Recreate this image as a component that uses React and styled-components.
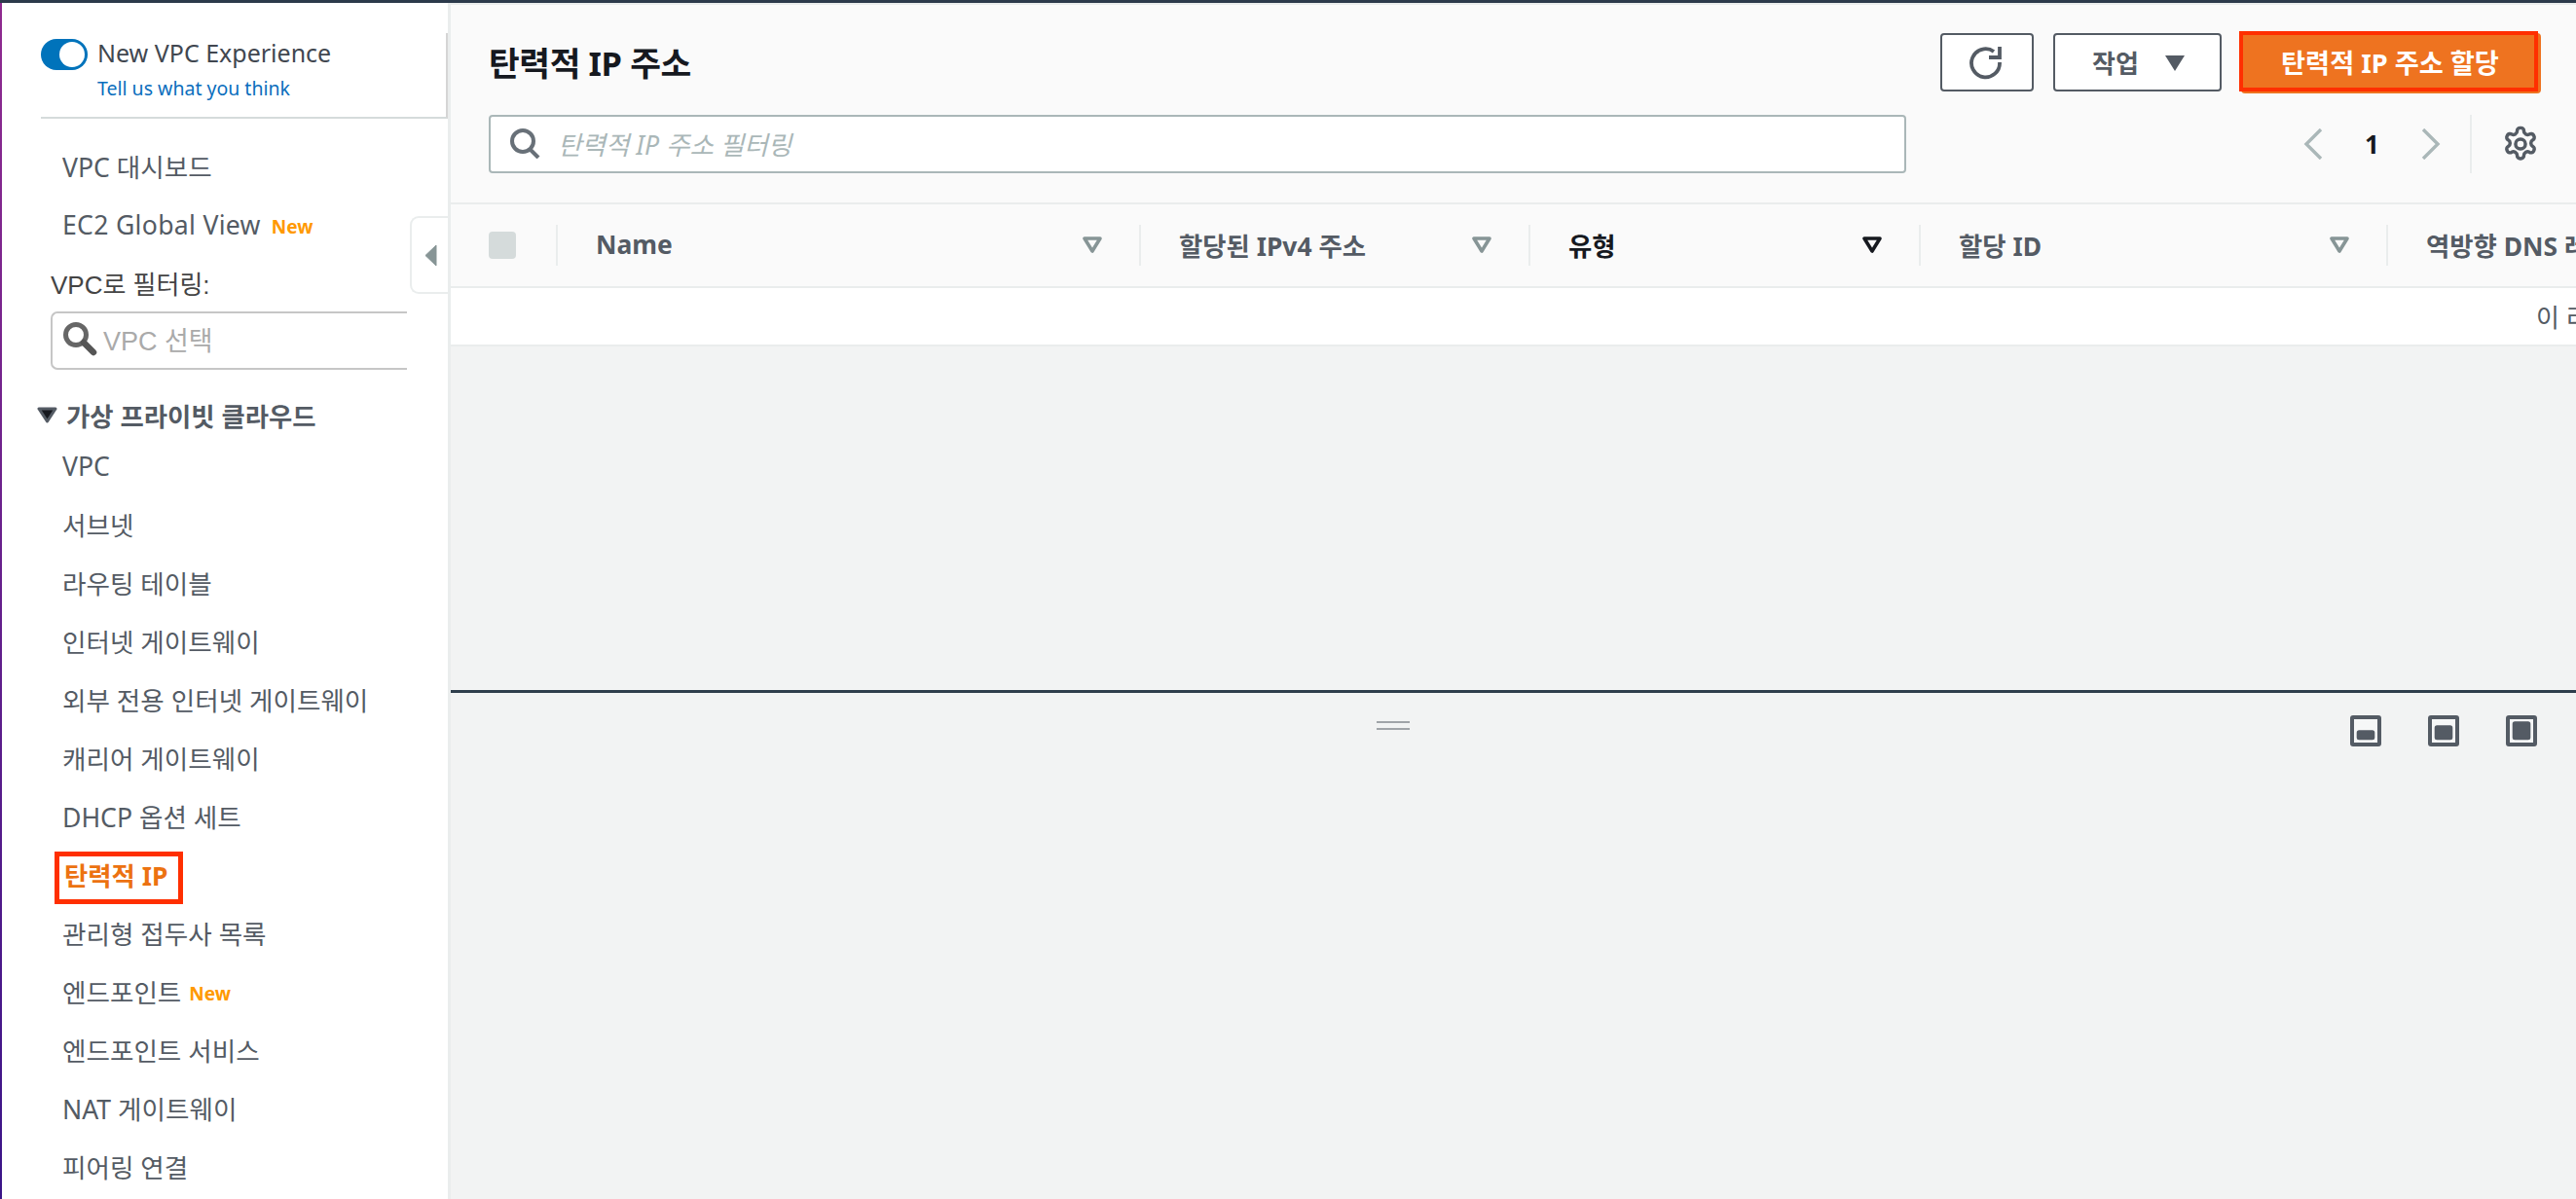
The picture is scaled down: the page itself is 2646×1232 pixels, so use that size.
import React from 'react';
import styled, { createGlobalStyle } from 'styled-components';

const Global = createGlobalStyle`
  html, body { margin: 0; padding: 0; background: #f2f3f3; }
  #root { width: 2646px; height: 1232px; overflow: hidden; }
  *, *::before, *::after { box-sizing: border-box; }
  body { font-family: "Noto Sans", "Noto Sans CJK KR", sans-serif; }
`;

const Page = styled.div`
  display: flex; flex-direction: column; width: 2646px; height: 1232px; overflow: hidden;
`;
const TopBar = styled.div`
  height: 3px; flex: none; background: #2c3a4b;
`;
const Body = styled.div`
  flex: 1; display: flex; min-height: 0;
`;
const Strip = styled.div`
  width: 2px; flex: none; background: linear-gradient(180deg, #8f2a8f 0%, #3a1488 100%);
`;
const Sidebar = styled.aside`
  position: relative; width: 461px; flex: none; background: #fff; border-right: 3px solid #eaeded;
  padding-top: 31px; overflow: hidden;
`;
const ToggleSection = styled.div`
  margin-left: 40px; height: 88px; border-bottom: 2px solid #d5dbdb; border-right: 2px solid #d5d5d5;
  display: grid; grid-template-columns: 48px 1fr; column-gap: 10px; padding-top: 6px; align-content: start;
`;
const Toggle = styled.div`
  width: 48px; height: 32px; border-radius: 16px; background: #0073bb; display: flex; align-items: center; justify-content: flex-end; padding-right: 3px;
  &::after { content: ""; width: 26px; height: 26px; border-radius: 50%; background: #fff; }
`;
const ToggleLabel = styled.div`
  font-size: 25px; line-height: 32px; color: #414750; white-space: nowrap; margin-top: -2px;
`;
const FeedbackLink = styled.a`
  grid-column: 2; font-size: 19.5px; line-height: 28px; margin-top: 5px; color: #0a6ebd; white-space: nowrap;
`;
const NavList = styled.div`
  display: flex; flex-direction: column; margin-top: ${p => p.$top || 0}px;
`;
const NavItem = styled.div`
  height: 60px; display: flex; align-items: center; padding: 0 0 3px 62px; font-size: 26.6px; color: #545b64; white-space: nowrap;
  letter-spacing: ${p => p.$spaced ? '0.3px' : '0'};
`;
const ActiveItem = styled.div`
  position: relative; height: 60px; display: flex; align-items: center; padding: 0 0 3px 64px; font-size: 26.4px; font-weight: 700; color: #ec7211; white-space: nowrap;
  &::after { content: ""; position: absolute; left: 54px; top: 5px; width: 132px; height: 54px; border: 5px solid #ff2f00; }
`;
const NewTag = styled.span`
  margin-left: ${p => p.$ml}px; font-size: 19px; font-weight: 700; letter-spacing: 0; color: #ff9900; padding-top: 5px;
`;
const FilterBlock = styled.div`
  padding: 0 0 26px 50px;
`;
const FilterLabel = styled.div`
  height: 58px; display: flex; align-items: center; padding-bottom: 2px; font-family: "Liberation Sans", "Noto Sans CJK KR", sans-serif; font-size: 26px; color: #444;
`;
const VpcSelect = styled.div`
  width: 366px; height: 60px; border: 2px solid #c6c6c6; border-right: none; border-radius: 7px 0 0 7px; display: flex; align-items: center; gap: 6px; padding: 0 0 4px 10px;
  font-family: "Liberation Sans", "Noto Sans CJK KR", sans-serif; font-size: 27px; color: #aaa;
`;
const GroupHead = styled.div`
  height: 44px; display: flex; align-items: center; gap: 9px; padding: 0 0 3px 36px; font-size: 26.4px; font-weight: 700; color: #545b64; white-space: nowrap;
`;
const Handle = styled.div`
  position: absolute; right: -3px; top: 219px; width: 42px; height: 80px; background: #fff; border: 2px solid #eaeded; border-right: none; border-radius: 9px 0 0 9px;
  display: flex; align-items: center; padding-left: 13px;
`;
const Main = styled.main`
  flex: 1; min-width: 0; display: flex; flex-direction: column; overflow: hidden;
`;
const Header = styled.header`
  flex: none; height: 207px; background: #fafafa; border-bottom: 2px solid #eaeded; padding: 31px 36px 0 39px;
  display: flex; flex-direction: column; gap: 24px; box-shadow: inset 0 2px 0 #eaeded;
`;
const HeaderRow = styled.div`
  display: flex; align-items: center; height: 60px;
`;
const Title = styled.h1`
  flex: 1; margin: 0 0 3px; font-size: 34.5px; font-weight: 700; color: #16191f; white-space: nowrap; letter-spacing: -0.4px;
`;
const Button = styled.button`
  height: 60px; width: ${p => p.$w}px; margin-left: ${p => p.$ml || 0}px; background: #fff; border: 2px solid #545b64; border-radius: 4px; display: flex; align-items: center; justify-content: center; gap: 26px;
  font-family: inherit; font-size: 26px; font-weight: 700; color: #545b64; padding: 0 ${p => p.$pr || 0}px 0 ${p => p.$pl || 0}px;
`;
const PrimaryButton = styled.button`
  position: relative; height: 62px; width: 308px; margin: 2px 0 0 20px; background: #ee7320; border: none; border-radius: 4px;
  font-family: inherit; font-size: 27.2px; font-weight: 700; color: #fff; padding: 0 2px 5px 0; white-space: nowrap;
  &::after { content: ""; position: absolute; left: -2px; top: -2px; width: 307px; height: 62px; border: 4px solid #ff2f00; }
`;
const FilterInput = styled.div`
  width: 1456px; height: 60px; background: #fff; border: 2px solid #aab7b8; border-radius: 4px; display: flex; align-items: center; gap: 18px; padding: 0 0 2px 19px;
  font-size: 26.6px; font-style: italic; color: #aab7b8; white-space: nowrap;
`;
const Pager = styled.div`
  flex: 1; display: flex; align-items: center; justify-content: flex-end; padding-right: 2px;
`;
const PageNum = styled.div`
  width: 101px; text-align: center; font-size: 26px; font-weight: 700; color: #16191f;
`;
const PagerDivider = styled.div`
  width: 2px; height: 60px; background: #eaeded; margin: 0 31px 0 30px;
`;
const TableHead = styled.div`
  flex: none; height: 86px; background: #fafafa; border-bottom: 2px solid #eaeded; display: flex; align-items: center; white-space: nowrap;
`;
const CheckCell = styled.div`
  width: 110px; flex: none; height: 42px; padding-left: 39px; display: flex; align-items: center; border-right: 2px solid #eaeded;
`;
const Check = styled.div`
  width: 28px; height: 28px; border-radius: 4px; background: #d5dbdb;
`;
const Col = styled.div`
  width: ${p => p.$w}px; flex: none; height: 42px; display: flex; align-items: center; justify-content: space-between; padding: 0 ${p => p.$last ? 0 : 38}px 2px 39px; border-right: ${p => p.$last ? 'none' : '2px solid #eaeded'};
  font-size: 26.4px; font-weight: 700; color: ${p => p.$sorted ? '#16191f' : '#545b64'};
`;
const EmptyRow = styled.div`
  flex: none; height: 60px; background: #fff; border-bottom: 2px solid #eaeded; display: flex; align-items: center; padding-left: 2142px; font-size: 26px; color: #545b64; white-space: nowrap;
`;
const Gap = styled.div`
  flex: 1;
`;
const SplitPanel = styled.section`
  flex: none; height: 523px; border-top: 3px solid #2f3e4c; display: flex; justify-content: flex-end; position: relative; padding: 23px 40px 0 0; gap: 48px;
`;
const Grip = styled.div`
  position: absolute; left: 951px; top: 29px; width: 34px; height: 9px; border-top: 2px solid #a0a4a8; border-bottom: 2px solid #a0a4a8;
`;

const Funnel = ({ c }) => (
  <svg width="20" height="17" viewBox="0 0 20 17" style={{ flex: 'none' }}>
    <path d="M2 2H18L10 15Z" fill="none" stroke={c} strokeWidth="3.6" strokeLinejoin="round" />
  </svg>
);
const Panel = ({ h }) => (
  <svg width="32" height="32" viewBox="0 0 32 32">
    <rect width="32" height="32" rx="3" fill="#545b64" />
    <rect x="4" y="4" width="24" height="24" fill="#f6f7f7" />
    <rect x="6.7" y={25.3 - h} width="18.6" height={h} rx="2.5" fill="#545b64" />
  </svg>
);
const Mag = () => (
  <svg width="36" height="36" viewBox="0 0 36 36" style={{ flex: 'none' }}>
    <circle cx="14" cy="14" r="10.5" fill="none" stroke="#666" strokeWidth="5" />
    <path d="M22 22L32 32" stroke="#555" strokeWidth="6.5" strokeLinecap="round" />
  </svg>
);

const items1 = ['VPC', '서브넷', '라우팅 테이블', '인터넷 게이트웨이', '외부 전용 인터넷 게이트웨이', '캐리어 게이트웨이', 'DHCP 옵션 세트'];

export default function App() {
  return (
    <Page>
      <Global />
      <TopBar />
      <Body>
        <Strip />
        <Sidebar>
          <ToggleSection>
            <Toggle />
            <ToggleLabel>New VPC Experience</ToggleLabel>
            <FeedbackLink>Tell us what you think</FeedbackLink>
          </ToggleSection>
          <NavList $top={20}>
            <NavItem>VPC 대시보드</NavItem>
            <NavItem $spaced>EC2 Global View<NewTag $ml={11}>New</NewTag></NavItem>
          </NavList>
          <FilterBlock>
            <FilterLabel>VPC로 필터링:</FilterLabel>
            <VpcSelect><Mag />VPC 선택</VpcSelect>
          </FilterBlock>
          <GroupHead>
            <svg width="21" height="17" viewBox="0 0 21 17"><path d="M2 2H19L10.5 15Z" fill="#16191f" stroke="#545b64" strokeWidth="3" strokeLinejoin="round" /></svg>
            가상 프라이빗 클라우드
          </GroupHead>
          <NavList>
            {items1.map(t => <NavItem key={t}>{t}</NavItem>)}
            <ActiveItem>탄력적 IP</ActiveItem>
            <NavItem>관리형 접두사 목록</NavItem>
            <NavItem>엔드포인트<NewTag $ml={8}>New</NewTag></NavItem>
            <NavItem>엔드포인트 서비스</NavItem>
            <NavItem>NAT 게이트웨이</NavItem>
            <NavItem>피어링 연결</NavItem>
          </NavList>
          <Handle>
            <svg width="13" height="23" viewBox="0 0 13 23"><path d="M12 1V22L1 11.5Z" fill="#879596" stroke="#879596" strokeLinejoin="round" /></svg>
          </Handle>
        </Sidebar>
        <Main>
          <Header>
            <HeaderRow>
              <Title>탄력적 IP 주소</Title>
              <Button $w={96} $pr={3}>
                <svg width="36" height="36" viewBox="0 0 36 36" fill="none" stroke="#545b64" strokeWidth="3.8">
                  <path d="M26 7A14.5 14.5 0 1 0 32 18" />
                  <path d="M32 2V13H21" />
                </svg>
              </Button>
              <Button $w={173} $ml={20} $pl={3}>
                작업
                <svg width="22" height="17" viewBox="0 0 22 17"><path d="M1 1H21L11 17Z" fill="#545b64" /></svg>
              </Button>
              <PrimaryButton>탄력적 IP 주소 할당</PrimaryButton>
            </HeaderRow>
            <HeaderRow>
              <FilterInput>
                <svg width="32" height="32" viewBox="0 0 32 32" fill="none" stroke="#687078" strokeWidth="4">
                  <circle cx="14" cy="14" r="11" />
                  <path d="M21 22L30 31" />
                </svg>
                탄력적 IP 주소 필터링
              </FilterInput>
              <Pager>
                <svg width="20" height="32" viewBox="0 0 20 32" fill="none" stroke="#aab7b8" strokeWidth="3.4"><path d="M18 1L3 16L18 31" /></svg>
                <PageNum>1</PageNum>
                <svg width="20" height="32" viewBox="0 0 20 32" fill="none" stroke="#aab7b8" strokeWidth="3.4"><path d="M2 1L17 16L2 31" /></svg>
                <PagerDivider />
                <svg width="38" height="38" viewBox="0 0 24 24" fill="none" stroke="#545b64" strokeWidth="2.2" strokeLinejoin="round">
                  <path d="M12.2 1.5h-.4a2 2 0 0 0-2 2v.2a2 2 0 0 1-1 1.7l-.4.3a2 2 0 0 1-2 0l-.2-.1a2 2 0 0 0-2.7.7l-.2.4a2 2 0 0 0 .7 2.7l.2.1a2 2 0 0 1 1 1.7v.5a2 2 0 0 1-1 1.7l-.2.1a2 2 0 0 0-.7 2.7l.2.4a2 2 0 0 0 2.7.7l.2-.1a2 2 0 0 1 2 0l.4.3a2 2 0 0 1 1 1.7v.2a2 2 0 0 0 2 2h.4a2 2 0 0 0 2-2v-.2a2 2 0 0 1 1-1.7l.4-.3a2 2 0 0 1 2 0l.2.1a2 2 0 0 0 2.7-.7l.2-.4a2 2 0 0 0-.7-2.7l-.2-.1a2 2 0 0 1-1-1.7v-.5a2 2 0 0 1 1-1.7l.2-.1a2 2 0 0 0 .7-2.7l-.2-.4a2 2 0 0 0-2.7-.7l-.2.1a2 2 0 0 1-2 0l-.4-.3a2 2 0 0 1-1-1.7v-.2a2 2 0 0 0-2-2z" />
                  <circle cx="12" cy="12" r="3.2" />
                </svg>
              </Pager>
            </HeaderRow>
          </Header>
          <TableHead>
            <CheckCell><Check /></CheckCell>
            <Col $w={599}>Name<Funnel c="#879596" /></Col>
            <Col $w={400}>할당된 IPv4 주소<Funnel c="#879596" /></Col>
            <Col $w={401} $sorted>유형<Funnel c="#16191f" /></Col>
            <Col $w={480}>할당 ID<Funnel c="#879596" /></Col>
            <Col $w={400} $last>역방향 DNS 레코드</Col>
          </TableHead>
          <EmptyRow>이 리전에 탄력적 IP 주소가 없습니다</EmptyRow>
          <Gap />
          <SplitPanel>
            <Grip />
            <Panel h={10} />
            <Panel h={15} />
            <Panel h={19} />
          </SplitPanel>
        </Main>
      </Body>
    </Page>
  );
}
